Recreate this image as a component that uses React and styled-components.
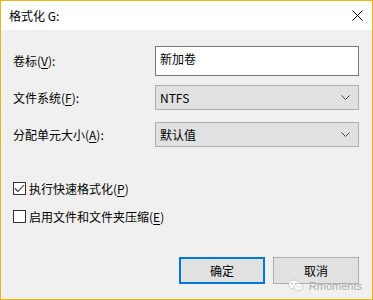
import React from "react";
import styled, { createGlobalStyle } from "styled-components";

const GlobalStyle = createGlobalStyle`
  html, body {
    margin: 0;
    padding: 0;
    background: #f0f0f0;
  }
  * {
    box-sizing: border-box;
  }
`;

const Dialog = styled.div`
  position: relative;
  width: 373px;
  height: 300px;
  border: 1px solid #f0b30f;
  background: #f0f0f0;
  display: flex;
  flex-direction: column;
  font-family: "Noto Sans CJK SC", "Liberation Sans", sans-serif;
  font-size: 12px;
  color: #000;
`;

const TitleBar = styled.div`
  height: 29px;
  background: #fff;
  display: flex;
  align-items: center;
  justify-content: space-between;
  padding: 0 9px 0 8px;
  flex-shrink: 0;
`;

const Title = styled.span`
  font-size: 12px;
  line-height: 1;
`;

const CloseButton = styled.div`
  width: 12px;
  height: 12px;
  display: flex;
  align-items: center;
  justify-content: center;
`;

const Body = styled.div`
  flex: 1;
  padding: 16px 13px 0 12px;
  display: flex;
  flex-direction: column;
`;

const Form = styled.div`
  display: grid;
  grid-template-columns: 142px 1fr;
  row-gap: ${(p) => p.$gap || 9}px;
  align-items: center;
`;

const Label = styled.div`
  line-height: 1;
`;

const Key = styled.span`
  text-decoration: underline;
  text-underline-offset: 2px;
`;

const TextBox = styled.div`
  height: 30px;
  border: 1px solid #7a7a7a;
  background: #fff;
  padding: 4px 0 0 4px;
  line-height: 16px;
`;

const Select = styled.div`
  height: 25px;
  border: 1px solid #adadad;
  background: #e1e1e1;
  display: flex;
  align-items: center;
  justify-content: space-between;
  padding: 0 8px 0 4px;
  margin-top: ${(p) => p.$top || 0}px;
`;

const Options = styled.div`
  margin-top: 35px;
  display: flex;
  flex-direction: column;
  gap: 15px;
`;

const CheckRow = styled.div`
  display: flex;
  align-items: center;
  gap: 3px;
  height: 13px;
  line-height: 1;
`;

const Box = styled.div`
  width: 13px;
  height: 13px;
  border: 1px solid #333;
  background: #fff;
  display: flex;
  align-items: center;
  justify-content: center;
  flex-shrink: 0;
`;

const Buttons = styled.div`
  margin-top: 34px;
  display: flex;
  justify-content: flex-end;
  gap: 8px;
`;

const Button = styled.div`
  width: 86px;
  height: 27px;
  background: #e1e1e1;
  border: ${(p) => (p.$primary ? "2px solid #0078d7" : "1px solid #adadad")};
  display: flex;
  align-items: center;
  justify-content: center;
  line-height: 1;
`;

const Watermark = styled.div`
  position: absolute;
  right: 10px;
  bottom: 7px;
  display: flex;
  align-items: center;
  gap: 5px;
  color: #a0a0a0;
  font-family: "Liberation Sans", sans-serif;
  font-size: 11px;
  text-shadow: 0 0 1px #fff;
  opacity: 0.9;
`;

const Chevron = () => (
  <svg width="9" height="5" viewBox="0 0 9 5">
    <polyline points="0.5,0.5 4.5,4.5 8.5,0.5" fill="none" stroke="#444" strokeWidth="1" />
  </svg>
);

const WeChat = () => (
  <svg width="16" height="13" viewBox="0 0 16 13">
    <ellipse cx="6" cy="5.5" rx="5.5" ry="4.5" fill="#fff" stroke="#bbb" strokeWidth="0.8" />
    <ellipse cx="10.5" cy="8" rx="4.5" ry="3.6" fill="#fff" stroke="#bbb" strokeWidth="0.8" />
    <circle cx="4" cy="4.5" r="0.8" fill="#aaa" />
    <circle cx="8" cy="4.5" r="0.8" fill="#aaa" />
    <circle cx="9" cy="7.6" r="0.6" fill="#aaa" />
    <circle cx="12" cy="7.6" r="0.6" fill="#aaa" />
  </svg>
);

export default function App() {
  return (
    <>
      <GlobalStyle />
      <Dialog>
        <TitleBar>
          <Title>格式化 G:</Title>
          <CloseButton>
            <svg width="11" height="11" viewBox="0 0 11 11">
              <path d="M0.5 0.5 L10.5 10.5 M10.5 0.5 L0.5 10.5" stroke="#000" strokeWidth="1" />
            </svg>
          </CloseButton>
        </TitleBar>
        <Body>
          <Form>
            <Label>
              卷标(<Key>V</Key>):
            </Label>
            <TextBox>新加卷</TextBox>
            <Label>
              文件系统(<Key>F</Key>):
            </Label>
            <Select>
              <span>NTFS</span>
              <Chevron />
            </Select>
            <Label style={{ marginTop: 3 }}>
              分配单元大小(<Key>A</Key>):
            </Label>
            <Select $top={3}>
              <span>默认值</span>
              <Chevron />
            </Select>
          </Form>
          <Options>
            <CheckRow>
              <Box>
                <svg width="11" height="9" viewBox="0 0 11 9">
                  <polyline points="1,4.5 4,7.5 10,1" fill="none" stroke="#333" strokeWidth="1.1" />
                </svg>
              </Box>
              <span>
                执行快速格式化(<Key>P</Key>)
              </span>
            </CheckRow>
            <CheckRow>
              <Box />
              <span>
                启用文件和文件夹压缩(<Key>E</Key>)
              </span>
            </CheckRow>
          </Options>
          <Buttons>
            <Button $primary>确定</Button>
            <Button>取消</Button>
          </Buttons>
        </Body>
        <Watermark>
          <WeChat />
          <span>Rmoments</span>
        </Watermark>
      </Dialog>
    </>
  );
}
